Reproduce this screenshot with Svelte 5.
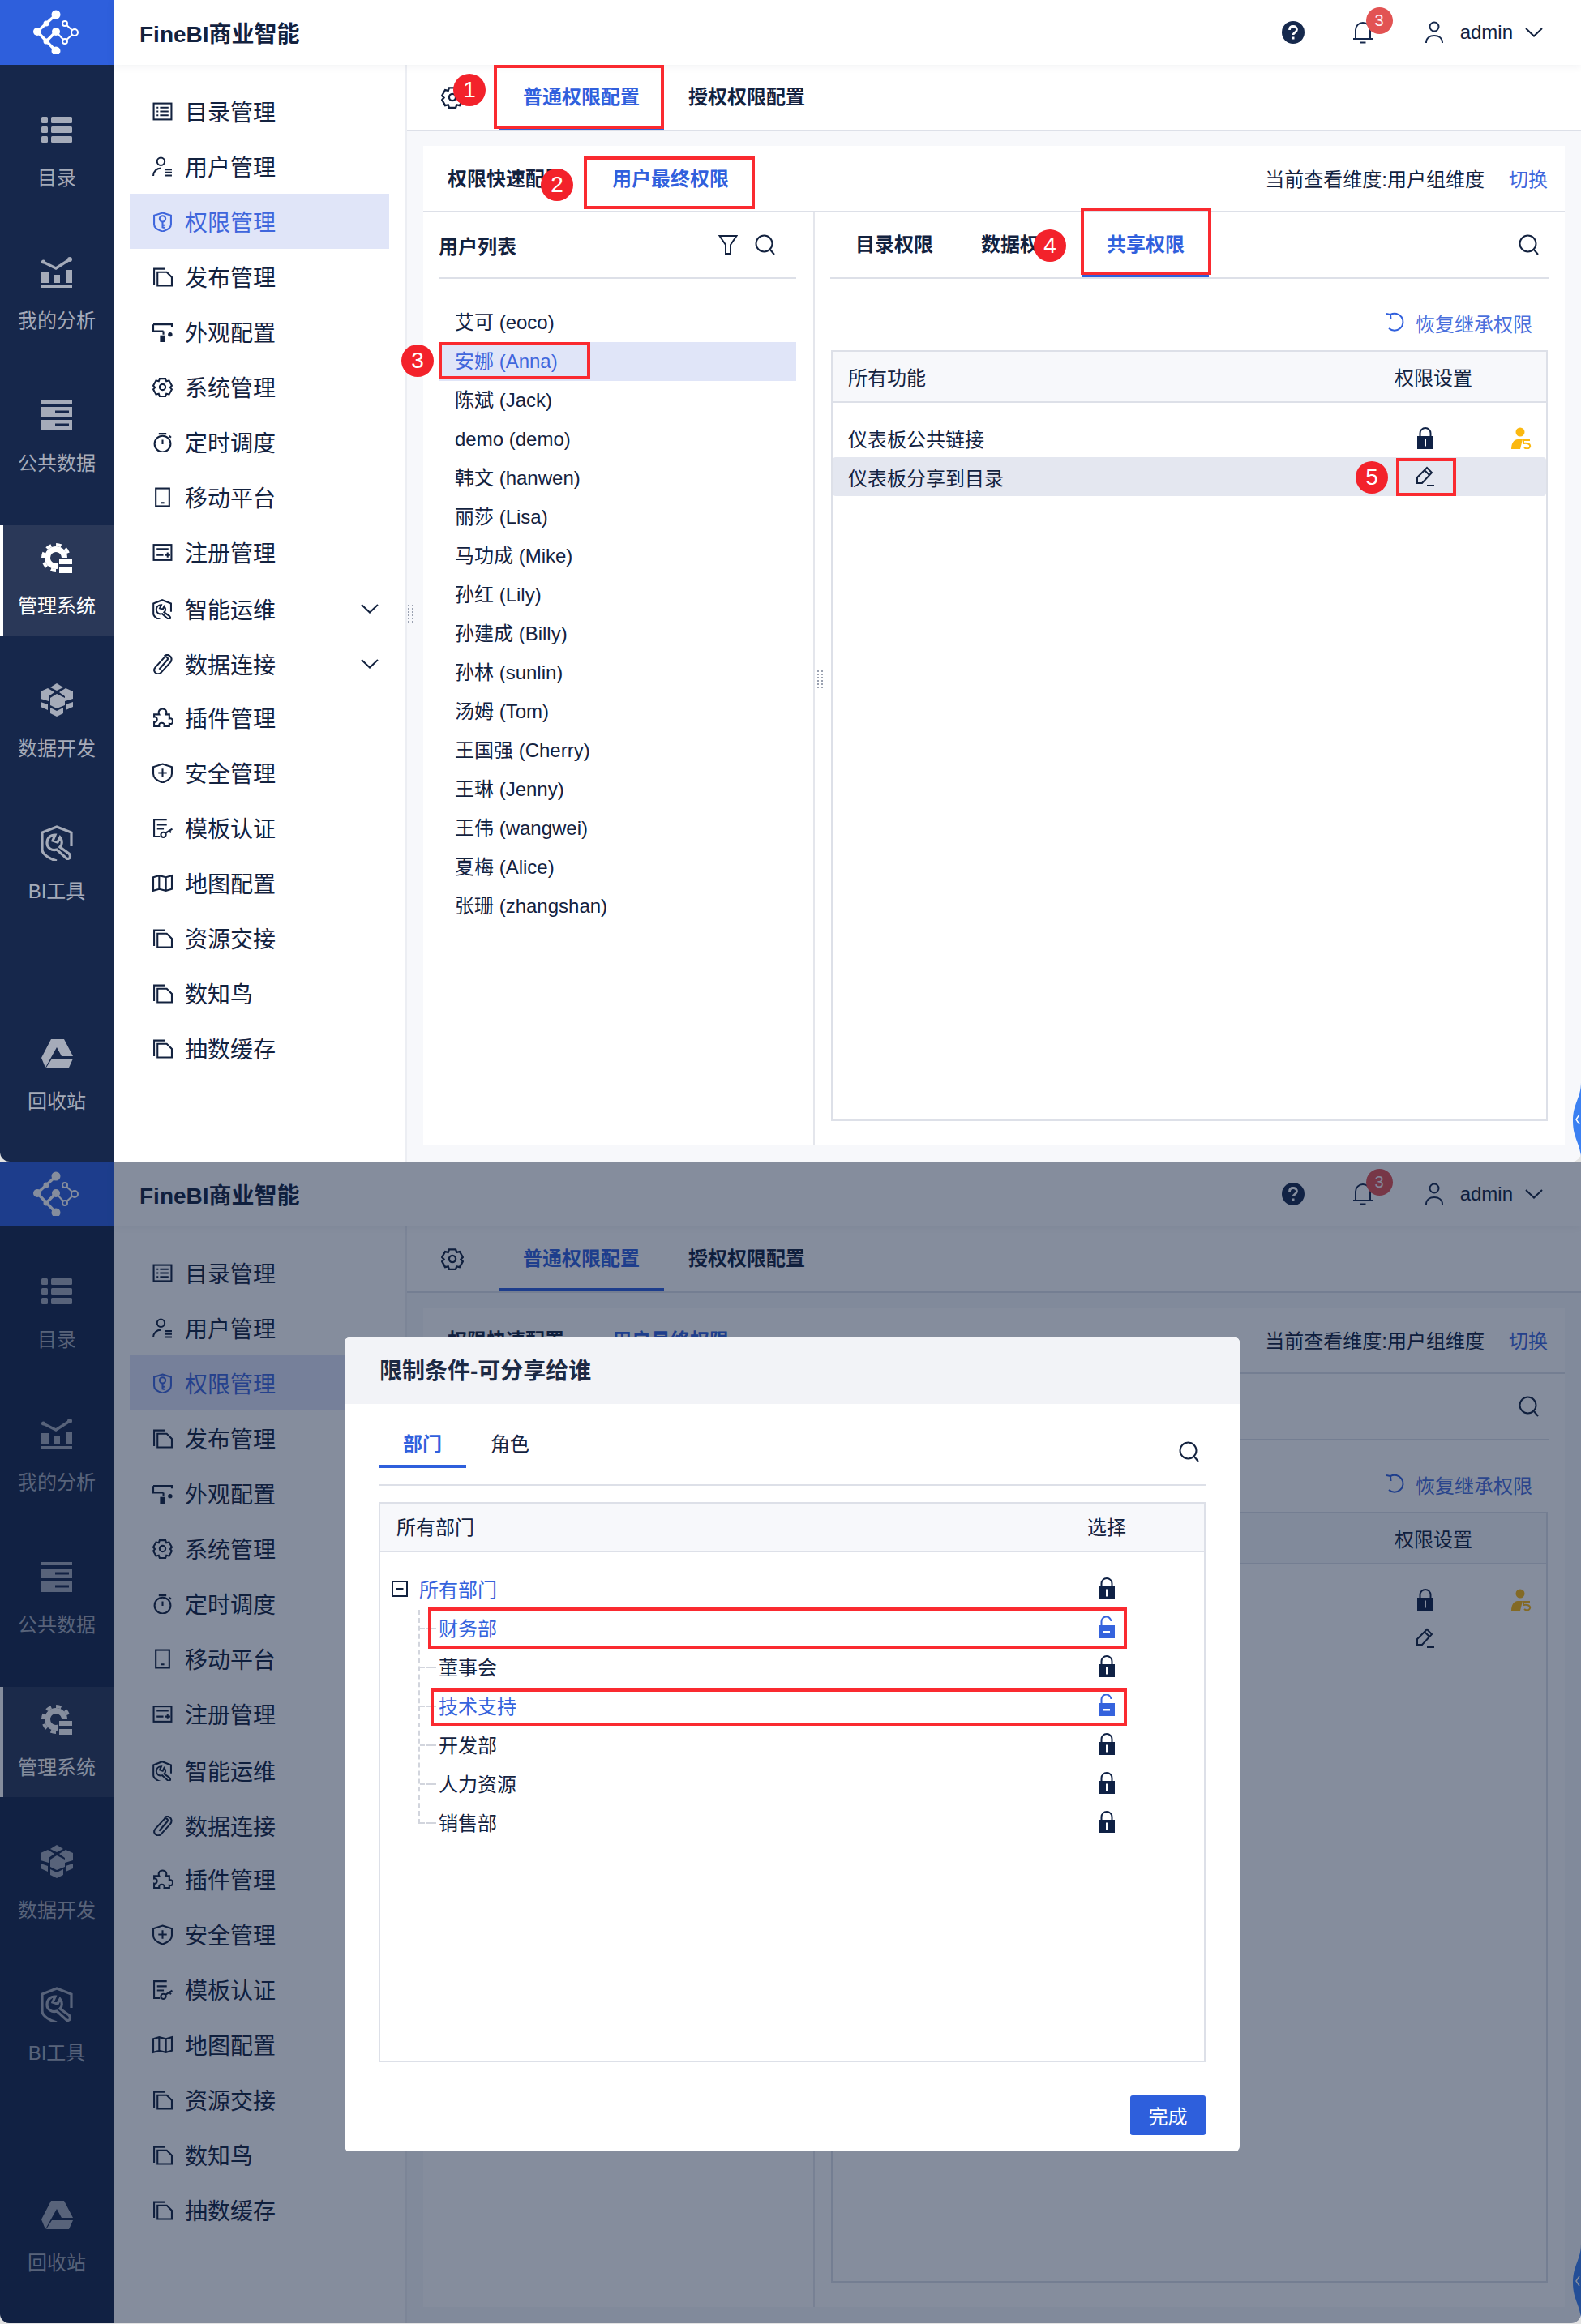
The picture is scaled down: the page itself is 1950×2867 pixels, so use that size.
<script>
	// side rail entries, the last one sits at the bottom
	const rail = [
		{ id: 'list', label: '目录' },
		{ id: 'chart', label: '我的分析' },
		{ id: 'data', label: '公共数据' },
		{ id: 'admin', label: '管理系统', active: true },
		{ id: 'cubes', label: '数据开发' },
		{ id: 'tool', label: 'BI工具' },
		{ id: 'bin', label: '回收站', bottom: true }
	];

	const menu = [
		{ icon: 'catalog', label: '目录管理' },
		{ icon: 'user', label: '用户管理' },
		{ icon: 'perm', label: '权限管理', active: true },
		{ icon: 'doc', label: '发布管理' },
		{ icon: 'roller', label: '外观配置' },
		{ icon: 'gear', label: '系统管理' },
		{ icon: 'timer', label: '定时调度' },
		{ icon: 'mobile', label: '移动平台' },
		{ icon: 'register', label: '注册管理' },
		{ icon: 'wrench', label: '智能运维', more: true },
		{ icon: 'clip', label: '数据连接', more: true },
		{ icon: 'puzzle', label: '插件管理' },
		{ icon: 'shield', label: '安全管理' },
		{ icon: 'template', label: '模板认证' },
		{ icon: 'map', label: '地图配置' },
		{ icon: 'doc', label: '资源交接' },
		{ icon: 'doc', label: '数知鸟' },
		{ icon: 'doc', label: '抽数缓存' }
	];

	const glyphs = {
		catalog: '<rect x="1.500" y="2.500" width="21" height="19"/><path d="M5 7.500h2M9 7.500h10M5 12h2M9 12h10M5 16.500h2M9 16.500h10"/>',
		user: '<circle cx="10" cy="6" r="4.500"/><path d="M1 23c0-5 4-9 9-9M15 15.500h8M15 19h8M15 22.500h8"/>',
		perm: '<path d="M12 1.500 22 4.500V15c0 4-5 7-10 8.500C7 22 2 19 2 15V4.500z"/><circle cx="12" cy="8.500" r="3.500"/><path d="M12 12v7.500M12 16h3M12 19h3"/>',
		doc: '<path d="M2 21V2.500h13"/><path d="M6 22.500V6.500h11l6 6v10z"/>',
		roller: '<path d="M1 3h22v3M1 3v8h12M13 11v4"/><rect x="9" y="16" width="6" height="8" fill="currentColor" stroke="none"/><circle cx="21" cy="15" r="2.600" fill="currentColor" stroke="none"/>',
		gear: '<path d="M8.500 2h7l1 3 3.200-.7 3.300 6-2 2.200 2 2.200-3.300 6-3.200-.7-1 3h-7l-1-3-3.200.7-3.300-6 2-2.200-2-2.200 3.300-6 3.200.7z"/><circle cx="12" cy="12" r="3.500"/>',
		timer: '<circle cx="12" cy="14" r="9.500"/><path d="M7.500 2h9M12 9v5.500M20 4.500l2 2"/>',
		mobile: '<rect x="4" y="1.500" width="16" height="21"/><path d="M10 18.500h4"/>',
		register: '<rect x="1.500" y="3" width="21" height="18"/><path d="M5 8h14M5 15h8M15 15h6M18 12v6"/>',
		wrench: '<g transform="scale(.58)" stroke-width="3.400"><path d="M38 26V9L20 2 2 9v21c0 6 10 12 18 14"/><path d="M18 12l-3 7 6 2 3-6c3 4 3 9 0 12l11 8c3 3 1 8-3 6L20 30c-6 2-12-2-12-8 0-6 4-10 10-10z"/></g>',
		clip: '<path d="M8 18 17.500 7a2.300 2.300 0 0 0-3.500-3L3.500 15.500C1 18.500 2 22 5 23c2 .8 4 0 5.500-1.500L21 10c2.500-3 2-7-1-8.500-2-1-4.500-.5-6 1"/>',
		puzzle: '<path d="M2 8h6c-1.500-3 0-6.500 4-6.500s5.500 3.500 4 6.500h4v5c3-1 4 1 4 3s-1 4-4 3v3h-6c.5-3-1-4-3-4s-3.500 1-3 4H2v-5c2 .5 3.500-1 3.500-3S4 10.500 2 11z"/>',
		shield: '<path d="M12 1.500 23 5v8c0 5-5 8.500-11 10.500C6 21.500 1 18 1 13V5z"/><path d="M12 7v10M7 12h10"/>',
		template: '<path d="M17 2H2v20h7M5.500 8H17M5.500 13h8"/><circle cx="13" cy="20" r="3"/><path d="M15.500 18l8-5M20 15l2 2.500"/>',
		map: '<path d="M1 5l7-2 8 2 7-2v16l-7 2-8-2-7 2zM8 3v16M16 5v16"/>'
	};

	const users = ['艾可 (eoco)', '安娜 (Anna)', '陈斌 (Jack)', 'demo (demo)', '韩文 (hanwen)', '丽莎 (Lisa)', '马功成 (Mike)', '孙红 (Lily)', '孙建成 (Billy)', '孙林 (sunlin)', '汤姆 (Tom)', '王国强 (Cherry)', '王琳 (Jenny)', '王伟 (wangwei)', '夏梅 (Alice)', '张珊 (zhangshan)'];

	const depts = [
		{ name: '财务部', open: true },
		{ name: '董事会' },
		{ name: '技术支持', open: true },
		{ name: '开发部' },
		{ name: '人力资源' },
		{ name: '销售部' }
	];

	// red callouts drawn over the first screenshot
	const marks = [
		{ x: 609, y: 80, w: 210, h: 79 },
		{ x: 720, y: 193, w: 211, h: 65 },
		{ x: 541, y: 422, w: 187, h: 46 },
		{ x: 1333, y: 256, w: 161, h: 83 },
		{ x: 1722, y: 565, w: 74, h: 47 }
	];
	const steps = [
		{ n: 1, x: 579, y: 111 },
		{ n: 2, x: 687, y: 228 },
		{ n: 3, x: 515, y: 445 },
		{ n: 4, x: 1295, y: 303 },
		{ n: 5, x: 1692, y: 589 }
	];
	const modalMarks = [
		{ x: 528, y: 550, w: 862, h: 51 },
		{ x: 531, y: 650, w: 859, h: 46 }
	];
</script>

{#snippet search()}
	<svg class="ico" viewBox="0 0 28 28" width="28" height="28"><circle cx="12.500" cy="12.500" r="10"/><path d="M20 20l5 6"/></svg>
{/snippet}

{#snippet lock()}
	<svg class="lock" viewBox="0 0 22 27" width="22" height="27">
		<path d="M4.500 12V7.500a6.500 6.500 0 0 1 13 0V12" fill="none" stroke="#0f2145" stroke-width="2"/>
		<rect x="1" y="11" width="20" height="16" fill="#0f2145"/>
		<rect x="10" y="14.500" width="2" height="9" fill="#fff"/>
	</svg>
{/snippet}

{#snippet unlock()}
	<svg class="lock" viewBox="0 0 22 27" width="22" height="27">
		<path d="M4.500 12V7a6 6 0 0 1 12-1" fill="none" stroke="#3563dd" stroke-width="2"/>
		<rect x="1" y="11" width="20" height="16" fill="#3563dd"/>
		<rect x="7" y="18" width="8" height="2.500" fill="#fff"/>
	</svg>
{/snippet}

{#snippet grip()}
	<svg viewBox="0 0 8 22" width="8" height="22" fill="#9aa1b0">
		{#each [1, 5, 9, 13, 17, 21] as y}
			<rect x="0" y={y - 1} width="2" height="2"/>
			<rect x="5" y={y - 1} width="2" height="2"/>
		{/each}
	</svg>
{/snippet}

{#snippet railIcon(id)}
	{#if id === 'list'}
		<svg viewBox="0 0 38 32" width="38" height="32" fill="currentColor">
			{#each [0, 12, 24] as y}
				<rect x="0" {y} width="8" height="8" rx="1.500"/>
				<rect x="12" {y} width="26" height="8" rx="1.500"/>
			{/each}
		</svg>
	{:else if id === 'chart'}
		<svg viewBox="0 0 38 38" width="38" height="38" fill="currentColor">
			<path d="M2 6l16 8L35 3" fill="none" stroke="currentColor" stroke-width="3.500" stroke-linecap="round"/>
			<circle cx="2.500" cy="6" r="2.500"/><circle cx="35" cy="3" r="3"/>
			<rect x="0" y="18" width="9" height="14"/><rect x="15" y="22" width="8" height="10"/><rect x="30" y="16" width="8" height="16"/>
			<rect x="0" y="34" width="38" height="4"/>
		</svg>
	{:else if id === 'data'}
		<svg viewBox="0 0 38 37" width="38" height="37" fill="currentColor">
			<rect x="0" y="0" width="38" height="4"/>
			<path fill-rule="evenodd" d="M0 8h38v12H0zM17 12.500v3h17v-3z"/>
			<path fill-rule="evenodd" d="M0 24h38v13H0zM17 28.500v3h17v-3z"/>
		</svg>
	{:else if id === 'admin'}
		<svg viewBox="0 0 38 38" width="38" height="38">
			<circle cx="18" cy="19" r="10.500" fill="none" stroke="currentColor" stroke-width="7"/>
			<circle cx="18" cy="19" r="16" fill="none" stroke="currentColor" stroke-width="4" stroke-dasharray="6.500 6"/>
			<rect x="20" y="19" width="18" height="19" fill="#2a3858"/>
			<rect x="22" y="21" width="16" height="6" fill="currentColor"/>
			<rect x="22" y="31" width="16" height="7" fill="currentColor"/>
		</svg>
	{:else if id === 'cubes'}
		<svg viewBox="0 0 40 42" width="40" height="42" fill="currentColor">
			<polygon points="12,5 20,0 28,5 20,9"/>
			<polygon points="20,13 30,18 30,27 20,31 12,27 12,18"/>
			<polygon points="0,10 9,6 17,11 10,16 10,22 0,19"/>
			<polygon points="40,10 31,6 23,11 30,16 30,22 40,19"/>
			<polygon points="0,23 9,26 9,33 0,29"/>
			<polygon points="40,23 31,26 31,33 40,29"/>
			<polygon points="12,30 20,34 28,30 28,37 20,41 12,37"/>
		</svg>
	{:else if id === 'tool'}
		<svg viewBox="0 0 40 44" width="40" height="44" fill="none" stroke="currentColor" stroke-width="3.200">
			<path d="M38 26V9L20 2 2 9v21c0 6 10 12 18 14"/>
			<path d="M18 12l-3 7 6 2 3-6c3 4 3 9 0 12l11 8c3 3 1 8-3 6L20 30c-6 2-12-2-12-8 0-6 4-10 10-10z"/>
		</svg>
	{:else}
		<svg viewBox="0 0 39 37" width="39" height="37" fill="currentColor">
			<polygon points="12,1 28,1 39,22 25,22 19,11 5,36 0,24"/>
			<polygon points="13,25 39,25 34,36 6,36"/>
		</svg>
	{/if}
{/snippet}

{#snippet shell(first)}
	<aside class="rail">
		<div class="logo">
			<svg viewBox="0 0 60 56" width="60" height="56" fill="#fff" stroke="#fff">
				<path d="M29 7 6 28l23 24M29 28 17 40" fill="none" stroke-width="3.500"/>
				<path d="M29 28l11 12 12-11-12-11" fill="none" stroke-width="2"/>
				<circle cx="29" cy="7" r="5.500" stroke="none"/><circle cx="6" cy="28" r="5" stroke="none"/><circle cx="29" cy="52" r="5.500" stroke="none"/><circle cx="29" cy="28" r="5" stroke="none"/><circle cx="17" cy="18" r="3.500" stroke="none"/><circle cx="17" cy="40" r="3.500" stroke="none"/>
				<circle cx="40" cy="18" r="3" fill="#2e5fdc" stroke-width="2"/><circle cx="52" cy="29" r="4" fill="#2e5fdc" stroke-width="2"/><circle cx="40" cy="40" r="3" fill="#2e5fdc" stroke-width="2"/>
			</svg>
		</div>
		<nav class="rail-nav">
			{#each rail as r}
				<div class="rail-item" class:active={r.active} class:bottom={r.bottom}>
					<div class="rail-icon">{@render railIcon(r.id)}</div>
					<span>{r.label}</span>
				</div>
			{/each}
		</nav>
	</aside>

	<div class="main">
		<header class="top">
			<div class="brand">FineBI商业智能</div>
			<div class="top-right">
				<svg class="help" viewBox="0 0 28 28" width="28" height="28">
					<circle cx="14" cy="14" r="14" fill="#16294d"/>
					<path d="M9.500 11c0-3 2-4.500 4.500-4.500s4.500 1.500 4.500 4c0 3.500-4.500 3.500-4.500 6.500" fill="none" stroke="#fff" stroke-width="2.800"/>
					<rect x="12.500" y="19.500" width="3" height="3" fill="#fff"/>
				</svg>
				<div class="bell">
					<svg class="ico" viewBox="0 0 26 28" width="26" height="28"><path d="M1 22h24M4 22V11a9 9 0 0 1 18 0v11M9.500 26.500h7"/></svg>
					<span class="badge">3</span>
				</div>
				<svg class="ico person" viewBox="0 0 22 28" width="22" height="28"><circle cx="11" cy="7" r="5.500"/><path d="M1 27c0-6 4.500-9 10-9s10 3 10 9"/></svg>
				<span class="admin">admin</span>
				<svg class="ico" viewBox="0 0 22 12" width="22" height="12"><path d="M1 1l10 9.500L21 1"/></svg>
			</div>
		</header>

		<div class="body">
			<div class="menu">
				{#each menu as m}
					<div class="menu-item" class:active={m.active} class:more={m.more}>
						<svg class="ico" viewBox="0 0 24 24" width="25" height="25">{@html glyphs[m.icon]}</svg>
						<span>{m.label}</span>
						{#if m.more}
							<svg class="ico chev" viewBox="0 0 22 12" width="22" height="12"><path d="M1 1l10 9.500L21 1"/></svg>
						{/if}
					</div>
				{/each}
			</div>

			<div class="content">
				<div class="tabs-top">
					<svg class="ico cog" viewBox="0 0 24 24" width="28" height="28">{@html glyphs.gear}</svg>
					<div class="tab on">普通权限配置</div>
					<div class="tab">授权权限配置</div>
				</div>
				<div class="wrap">
					<section class="panel">
						<div class="panel-head">
							<div class="ptab">权限快速配置</div>
							<div class="ptab on">用户最终权限</div>
							<div class="dim-info">当前查看维度:用户组维度</div>
							<div class="switch">切换</div>
						</div>
						<div class="columns">
							<div class="left">
								<div class="left-head">
									<b>用户列表</b>
									<svg class="ico funnel" viewBox="0 0 24 26" width="24" height="26"><path d="M1.500 2h21L15 13v11H9V13z"/></svg>
									{@render search()}
								</div>
								<ul class="users">
									{#each users as u, i}
										<li class:sel={i === 1}>{u}</li>
									{/each}
								</ul>
							</div>
							<div class="right">
								<div class="right-tabs">
									<div class="rtab">目录权限</div>
									<div class="rtab">数据权限</div>
									<div class="rtab on">共享权限</div>
									<div class="right-search">{@render search()}</div>
								</div>
								<div class="restore">
									<svg class="ico blue" viewBox="0 0 26 26" width="26" height="26"><path d="M7 3a10.500 10.500 0 1 1-2 17M2 2l5 1 .5 6"/></svg>
									<span>恢复继承权限</span>
								</div>
								<div class="table">
									<div class="thead"><span>所有功能</span><span>权限设置</span></div>
									<div class="tbody">
										<div class="row">
											<span>仪表板公共链接</span>
											<span class="cell">{@render lock()}</span>
											<span></span>
											<span class="cell">
												<svg viewBox="0 0 26 27" width="26" height="27">
													<circle cx="11" cy="6" r="5.500" fill="#fbb80f"/>
													<path d="M0 27c0-7 3-12 8-12h6l-3 12z" fill="#fbb80f"/>
													<path d="M15 16h8M15 16v4c5-1 9 1 8 4s-5 3-7 1" fill="none" stroke="#fbb80f" stroke-width="2"/>
												</svg>
											</span>
										</div>
										<div class="row" class:hover={first}>
											<span>仪表板分享到目录</span>
											<span class="cell">
												<svg class="ico" viewBox="0 0 28 28" width="28" height="28"><path d="M16 3l6 6L10 22H4v-7zM13 6l6 6M16 25h9"/></svg>
											</span>
											<span></span>
											<span></span>
										</div>
									</div>
								</div>
							</div>
						</div>
					</section>
				</div>
			</div>
		</div>
	</div>

	<div class="grip one">{@render grip()}</div>
	<div class="grip two">{@render grip()}</div>

	<svg class="handle" viewBox="0 0 10 96" width="10" height="96">
		<path d="M10 0C10 20 0 26 0 48s10 28 10 48z" fill="#3b80f2"/>
		<path d="M8 40l-4 6 4 6" fill="none" stroke="#fff" stroke-width="1.500"/>
	</svg>

	{#if first}
		{#each marks as b}
			<div class="mark" style="left:{b.x}px;top:{b.y}px;width:{b.w}px;height:{b.h}px"></div>
		{/each}
		{#each steps as s}
			<div class="step" style="left:{s.x - 20}px;top:{s.y - 20}px">{s.n}</div>
		{/each}
	{/if}
{/snippet}

<div class="page">
	<div class="screen">
		{@render shell(true)}
	</div>

	<div class="screen">
		{@render shell(false)}
		<div class="overlay"></div>
		<div class="modal">
			<div class="modal-head">限制条件-可分享给谁</div>
			<div class="modal-body">
				<div class="m-tabs">
					<div class="mtab on">部门</div>
					<div class="mtab">角色</div>
					<div class="m-search">{@render search()}</div>
				</div>
				<div class="m-table">
					<div class="m-thead"><span>所有部门</span><span>选择</span></div>
					<div class="m-tbody">
						<div class="tree-row root">
							<svg class="ico toggle" viewBox="0 0 20 20" width="20" height="20"><rect x="1" y="1" width="18" height="18"/><path d="M5.500 10h9"/></svg>
							<span class="link">所有部门</span>
							{@render lock()}
						</div>
						<div class="tree">
							{#each depts as d}
								<div class="tree-row child">
									<span class:link={d.open}>{d.name}</span>
									{#if d.open}{@render unlock()}{:else}{@render lock()}{/if}
								</div>
							{/each}
						</div>
					</div>
				</div>
				<div class="m-foot"><button class="done">完成</button></div>
			</div>
		</div>
		{#each modalMarks as b}
			<div class="mark" style="left:{b.x}px;top:{b.y}px;width:{b.w}px;height:{b.h}px"></div>
		{/each}
	</div>
</div>

<style>
	:global(body) {
		background: #e2e2e2;
	}

	.page {
		width: 1950px;
		font-family: "Liberation Sans", "Noto Sans CJK SC", sans-serif;
		font-size: 24px;
		color: #13223f;
	}

	.screen {
		position: relative;
		display: flex;
		width: 1950px;
		height: 1433px;
		overflow: hidden;
		border-radius: 0 0 12px 12px;
		background: #fff;
	}

	.ico {
		fill: none;
		stroke: currentColor;
		stroke-width: 2;
		flex: none;
		display: block;
	}

	.lock {
		display: block;
		flex: none;
	}

	/* side rail */
	.rail {
		width: 140px;
		flex: none;
		display: flex;
		flex-direction: column;
		background: #16274b;
	}

	.logo {
		height: 80px;
		background: #2e5fdc;
		display: flex;
		align-items: center;
		justify-content: center;
		padding-bottom: 2px;
		box-sizing: border-box;
	}

	.rail-nav {
		flex: 1;
		display: flex;
		flex-direction: column;
		gap: 40px;
		padding: 40px 0 38px;
	}

	.rail-item {
		height: 136px;
		box-sizing: border-box;
		padding-top: 20px;
		display: flex;
		flex-direction: column;
		align-items: center;
		gap: 22px;
		color: #a5abb9;
		line-height: 36px;
	}

	.rail-item.active {
		background: #2a3858;
		color: #fff;
		box-shadow: inset 4px 0 0 #fff;
	}

	.rail-item.bottom {
		margin-top: auto;
	}

	.rail-icon {
		height: 40px;
		display: flex;
		align-items: center;
	}

	/* header */
	.main {
		flex: 1;
		min-width: 0;
		display: flex;
		flex-direction: column;
	}

	.top {
		height: 80px;
		flex: none;
		display: flex;
		align-items: center;
		justify-content: space-between;
		padding: 0 47px 0 32px;
		background: #fff;
		box-shadow: 0 2px 10px rgba(20, 30, 60, 0.06);
		position: relative;
	}

	.brand {
		font-size: 28px;
		font-weight: 700;
		color: #13223f;
	}

	.top-right {
		display: flex;
		align-items: center;
	}

	.bell {
		position: relative;
		margin-left: 59px;
		color: #16294d;
	}

	.badge {
		position: absolute;
		left: 17px;
		top: -17px;
		width: 33px;
		height: 33px;
		border-radius: 50%;
		background: #e25353;
		color: #fdf1f1;
		font-size: 20px;
		line-height: 33px;
		text-align: center;
	}

	.person {
		margin-left: 64px;
		color: #16294d;
	}

	.admin {
		margin: 0 15px 0 21px;
	}

	/* second menu */
	.body {
		flex: 1;
		display: flex;
		min-height: 0;
	}

	.menu {
		width: 360px;
		flex: none;
		box-sizing: border-box;
		padding: 23px 20px 0;
	}

	.menu-item {
		height: 68px;
		display: flex;
		align-items: center;
		gap: 15px;
		padding: 0 13px 0 28px;
		font-size: 28px;
	}

	.menu-item.more {
		position: relative;
		top: 2px;
	}

	.menu-item.active {
		background: #e0e5f8;
		color: #3f66dc;
	}

	.chev {
		margin-left: auto;
	}

	/* main content */
	.content {
		flex: 1;
		min-width: 0;
		display: flex;
		flex-direction: column;
		border-left: 2px solid #eceef3;
		box-sizing: border-box;
	}

	.tabs-top {
		height: 80px;
		flex: none;
		box-sizing: content-box;
		display: flex;
		border-bottom: 2px solid #dde0e8;
		background: #fff;
		padding-left: 42px;
	}

	.cog {
		align-self: center;
		margin-right: 43px;
	}

	.tab {
		height: 76px;
		padding: 0 30px;
		font-weight: 700;
		line-height: 80px;
		border-bottom: 4px solid transparent;
	}

	.tab.on {
		color: #3160dd;
		border-bottom-color: #2e5fdc;
	}

	.wrap {
		flex: 1;
		min-height: 0;
		display: flex;
		background: #f7f8fb;
		padding: 18px 20px 20px 20px;
	}

	.panel {
		flex: 1;
		display: flex;
		flex-direction: column;
		background: #fff;
		min-width: 0;
	}

	.panel-head {
		height: 80px;
		flex: none;
		display: flex;
		align-items: flex-start;
		border-bottom: 2px solid #dde0e8;
		padding: 0 21px 0 30px;
	}

	.ptab {
		font-weight: 700;
		line-height: 82px;
		margin-right: 59px;
	}

	.ptab.on {
		color: #3160dd;
	}

	.dim-info {
		margin-left: auto;
		line-height: 84px;
	}

	.switch {
		margin-left: 30px;
		color: #3f66dc;
		line-height: 84px;
	}

	.columns {
		flex: 1;
		display: flex;
		min-height: 0;
	}

	.left {
		width: 483px;
		flex: none;
		box-sizing: border-box;
		padding: 0 21px 0 19px;
		border-right: 2px solid #e4e6ec;
	}

	.left-head {
		height: 80px;
		display: flex;
		align-items: center;
		border-bottom: 2px solid #dde0e8;
		box-sizing: content-box;
		padding-right: 24px;
	}

	.left-head b {
		margin-right: auto;
	}

	.funnel {
		margin-right: 20px;
	}

	.users {
		list-style: none;
		margin: 30px 0 0;
		padding: 0;
	}

	.users li {
		height: 48px;
		line-height: 48px;
		padding-left: 20px;
	}

	.users li.sel {
		background: #e0e5f8;
		color: #3f66dc;
	}

	.right {
		flex: 1;
		min-width: 0;
		display: flex;
		flex-direction: column;
		padding: 0 19px 30px 19px;
	}

	.right-tabs {
		height: 80px;
		flex: none;
		display: flex;
		border-bottom: 2px solid #dde0e8;
		box-sizing: content-box;
		padding-left: 1px;
	}

	.rtab {
		padding: 0 30px;
		width: 96px;
		font-weight: 700;
		line-height: 80px;
		box-sizing: content-box;
		margin-right: -1px;
	}

	.rtab.on {
		color: #3160dd;
		height: 77px;
		border-bottom: 3px solid #2e5fdc;
	}

	.right-search {
		margin-left: auto;
		align-self: center;
		padding-right: 11px;
	}

	.restore {
		display: flex;
		align-items: center;
		justify-content: flex-end;
		gap: 12px;
		height: 48px;
		margin-top: 30px;
		margin-bottom: 8px;
		padding-right: 21px;
		color: #4a6fdc;
	}

	.restore .blue {
		color: #3160dd;
	}

	.table {
		flex: 1;
		margin: 2px 2px 0 1px;
		border: 2px solid #dde0e8;
		min-height: 0;
	}

	.thead {
		height: 61px;
		background: #f7f8fb;
		border-bottom: 2px solid #dde0e8;
		box-sizing: content-box;
		display: flex;
		justify-content: space-between;
		align-items: center;
		padding: 0 91px 0 19px;
	}

	.tbody {
		padding-top: 19px;
	}

	.row {
		height: 48px;
		display: grid;
		grid-template-columns: 1fr 80px 49px 60px;
		align-items: center;
		padding-left: 19px;
		border-radius: 4px;
	}

	.row.hover {
		background: #e4e7f0;
	}

	.cell {
		display: flex;
		justify-content: center;
	}

	.grip {
		position: absolute;
		line-height: 0;
	}

	.grip.one {
		left: 503px;
		top: 746px;
	}

	.grip.two {
		left: 1008px;
		top: 827px;
	}

	.handle {
		position: absolute;
		right: 0;
		bottom: 2px;
	}

	/* callouts */
	.mark {
		position: absolute;
		box-sizing: border-box;
		border: 4px solid #fa2a30;
	}

	.step {
		position: absolute;
		width: 40px;
		height: 40px;
		border-radius: 50%;
		background: #f3222b;
		color: #fff;
		font-size: 28px;
		line-height: 40px;
		text-align: center;
	}

	/* dialog */
	.overlay {
		position: absolute;
		inset: 0;
		background: rgba(11, 27, 59, 0.5);
	}

	.modal {
		position: absolute;
		left: 425px;
		top: 217px;
		width: 1104px;
		height: 1004px;
		background: #fff;
		border-radius: 6px;
		overflow: hidden;
	}

	.modal-head {
		height: 82px;
		line-height: 84px;
		padding-left: 43px;
		background: #f2f3f7;
		font-size: 28px;
		font-weight: 700;
		color: #1d2a44;
	}

	.modal-body {
		padding: 21px 41px 0 42px;
	}

	.m-tabs {
		height: 78px;
		display: flex;
		align-items: flex-start;
		border-bottom: 2px solid #dde0e8;
		box-sizing: content-box;
	}

	.mtab {
		width: 48px;
		padding: 4px 30px 0;
		height: 50px;
		line-height: 50px;
		box-sizing: content-box;
	}

	.mtab.on {
		color: #3160dd;
		font-weight: 700;
		border-bottom: 4px solid #2e5fdc;
	}

	.m-search {
		margin: 24px 7px 0 auto;
	}

	.m-table {
		margin: 20px 1px 0 0;
		height: 691px;
		box-sizing: border-box;
		border: 2px solid #dde0e8;
	}

	.m-thead {
		height: 54px;
		padding: 0 96px 4px 20px;
		background: #f7f8fb;
		border-bottom: 2px solid #dde0e8;
		box-sizing: content-box;
		display: flex;
		justify-content: space-between;
		align-items: center;
	}

	.m-tbody {
		padding-top: 23px;
	}

	.tree-row {
		height: 48px;
		box-sizing: border-box;
		display: flex;
		align-items: center;
		padding-right: 109px;
		padding-bottom: 5px;
		position: relative;
	}

	.tree-row :global(.lock) {
		margin-left: auto;
		margin-top: -1px;
	}

	.tree-row.root {
		padding-left: 14px;
		gap: 14px;
	}

	.toggle {
		margin-top: 1px;
	}

	.tree-row.child {
		padding-left: 72px;
	}

	.link {
		color: #3563dd;
	}

	.tree {
		position: relative;
	}

	.tree::before {
		content: '';
		position: absolute;
		left: 47px;
		top: 0;
		bottom: 24px;
		border-left: 2px dashed #d2d5dd;
	}

	.tree-row.child::before {
		content: '';
		position: absolute;
		left: 49px;
		width: 20px;
		top: 22px;
		border-top: 2px dashed #d2d5dd;
	}

	.m-foot {
		display: flex;
		justify-content: flex-end;
		margin-top: 41px;
	}

	.done {
		width: 93px;
		height: 49px;
		border: 0;
		border-radius: 3px;
		background: #2e5fdc;
		color: #fff;
		font: inherit;
		margin-right: 1px;
	}
</style>
